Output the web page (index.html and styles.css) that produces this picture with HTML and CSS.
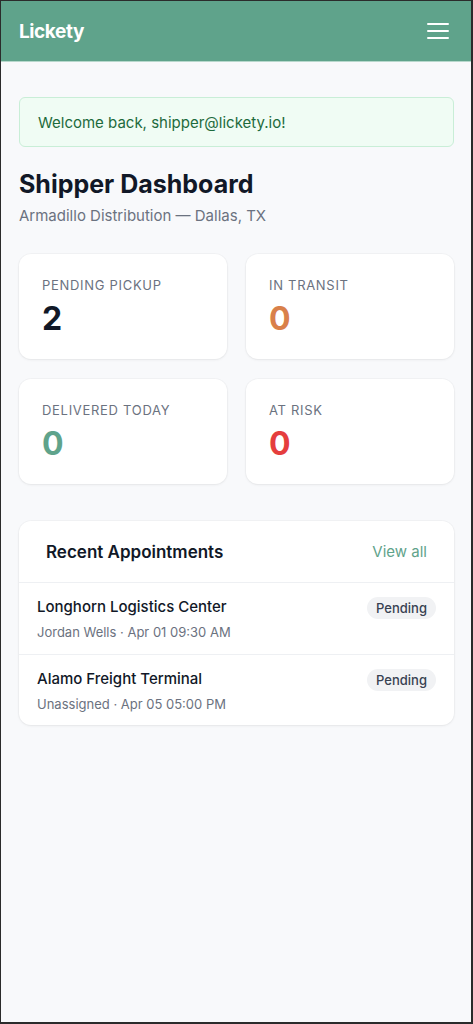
FILE: index.html
```html
<!DOCTYPE html>
<html lang="en">
<head>
  <meta charset="UTF-8">
  <meta name="viewport" content="width=device-width, initial-scale=1.0">
  <title>Lickety - Shipper Dashboard</title>
  <link rel="stylesheet" href="styles.css">
</head>
<body>
  <div id="app">
    <header class="topbar">
      <a href="#" class="brand">Lickety</a>
      <button class="menu-button" aria-label="Menu">
        <svg width="22" height="18" viewBox="0 0 22 18">
          <path d="M1 2h20M1 9h20M1 16h20" stroke="#fff" stroke-width="2" stroke-linecap="round" fill="none"/>
        </svg>
      </button>
    </header>

    <main class="content">
      <div class="alert">Welcome back, shipper@lickety.io!</div>

      <div class="page-title">
        <h1>Shipper Dashboard</h1>
        <p>Armadillo Distribution — Dallas, TX</p>
      </div>

      <div class="stats">
        <div class="stat-card">
          <div class="stat-label">Pending Pickup</div>
          <div class="stat-value">2</div>
        </div>
        <div class="stat-card">
          <div class="stat-label">In Transit</div>
          <div class="stat-value orange">0</div>
        </div>
        <div class="stat-card">
          <div class="stat-label">Delivered Today</div>
          <div class="stat-value green">0</div>
        </div>
        <div class="stat-card">
          <div class="stat-label">At Risk</div>
          <div class="stat-value red">0</div>
        </div>
      </div>

      <section class="panel">
        <div class="panel-header">
          <h2>Recent Appointments</h2>
          <a href="#" class="view-all">View all</a>
        </div>
        <div class="appt">
          <div class="appt-info">
            <div class="appt-name">Longhorn Logistics Center</div>
            <div class="appt-meta">Jordan Wells · Apr 01 09:30 AM</div>
          </div>
          <span class="badge">Pending</span>
        </div>
        <div class="appt">
          <div class="appt-info">
            <div class="appt-name">Alamo Freight Terminal</div>
            <div class="appt-meta">Unassigned · Apr 05 05:00 PM</div>
          </div>
          <span class="badge">Pending</span>
        </div>
      </section>
    </main>
  </div>
</body>
</html>
```

FILE: styles.css
```css
* {
  box-sizing: border-box;
}

html, body {
  margin: 0;
  padding: 0;
}

body {
  font-family: Inter, "Noto Sans", sans-serif;
  background-color: #2b2b2b;
  color: #111827;
}

#app {
  height: 1024px;
  border-top: 1px solid #2b2b2b;
  border-left: 1px solid #2b2b2b;
  border-right: 2px solid #2b2b2b;
  border-bottom: 2px solid #2b2b2b;
  background-color: #f8f9fb;
  overflow: hidden;
}

.topbar {
  height: 61px;
  background-color: #5fa38b;
  border-bottom: 1px solid #b7d8cc;
  display: flex;
  align-items: center;
  justify-content: space-between;
  padding: 0 22px 0 18px;
}

.brand {
  color: #fff;
  font-size: 19px;
  font-weight: 700;
  text-decoration: none;
  letter-spacing: -0.4px;
}

.menu-button {
  background: none;
  border: none;
  padding: 0;
  display: flex;
  cursor: pointer;
}

.content {
  padding: 35px 17px 0 18px;
}

.alert {
  height: 50px;
  display: flex;
  align-items: center;
  padding: 0 18px;
  background-color: #f0fcf4;
  border: 1px solid #c9eed7;
  border-radius: 6px;
  color: #1d6a3c;
  font-size: 15px;
}

.page-title {
  margin-top: 21px;
}

.page-title h1 {
  margin: 0;
  font-size: 25px;
  font-weight: 700;
  line-height: 32px;
  color: #111827;
}

.page-title p {
  margin: 5px 0 0;
  font-size: 15px;
  line-height: 22px;
  color: #6b7280;
}

.stats {
  display: grid;
  grid-template-columns: 1fr 1fr;
  column-gap: 19px;
  row-gap: 20px;
  margin-top: 27px;
}

.stat-card {
  height: 105px;
  background-color: #fff;
  border-radius: 12px;
  box-shadow: 0 1px 3px rgba(0, 0, 0, 0.06), 0 0 0 1px rgba(0, 0, 0, 0.025);
  padding: 23px 22px 0 23px;
}

.stat-label {
  font-size: 13px;
  line-height: 16px;
  text-transform: uppercase;
  letter-spacing: 0.7px;
  color: #6b7280;
}

.stat-value {
  margin-top: 8px;
  font-size: 32px;
  font-weight: 700;
  line-height: 36px;
  color: #111827;
}

.stat-value.orange {
  color: #d9804a;
}

.stat-value.green {
  color: #5fa38b;
}

.stat-value.red {
  color: #e53e3e;
}

.panel {
  margin-top: 37px;
  background-color: #fff;
  border-radius: 12px;
  box-shadow: 0 1px 3px rgba(0, 0, 0, 0.06), 0 0 0 1px rgba(0, 0, 0, 0.025);
  overflow: hidden;
}

.panel-header {
  height: 62px;
  display: flex;
  align-items: center;
  justify-content: space-between;
  padding: 0 27px;
  border-bottom: 1px solid #eef0f3;
}

.panel-header h2 {
  margin: 0;
  font-size: 17px;
  font-weight: 600;
  color: #111827;
}

.view-all {
  color: #5fa38b;
  font-size: 15px;
  text-decoration: none;
}

.appt {
  display: flex;
  align-items: flex-start;
  justify-content: space-between;
  padding: 14px 18px 13px 18px;
  border-bottom: 1px solid #eef0f3;
}

.appt:last-child {
  border-bottom: none;
  padding-bottom: 12px;
}

.appt-name {
  font-size: 15px;
  font-weight: 500;
  line-height: 20px;
  color: #111827;
}

.appt-meta {
  margin-top: 6px;
  font-size: 13px;
  line-height: 18px;
  color: #6b7280;
}

.badge {
  background-color: #f1f2f4;
  color: #374151;
  font-size: 13px;
  font-weight: 500;
  padding: 3px 9px;
  border-radius: 999px;
  line-height: 16px;
}
```
